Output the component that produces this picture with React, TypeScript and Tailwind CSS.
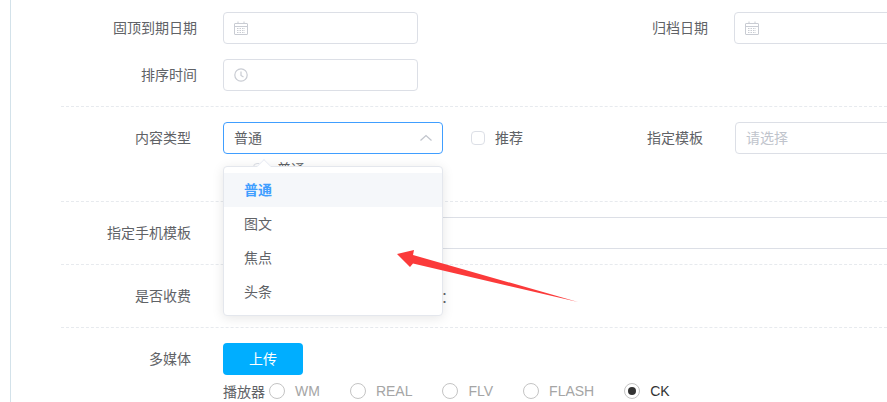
import type { ReactNode } from "react";

const cjk = "font-['Microsoft_YaHei','Noto_Sans_CJK_SC',sans-serif]";

function CalendarIcon() {
  return (
    <svg width="14" height="14" viewBox="0 0 14 14" fill="none" stroke="#c9ccd3" strokeWidth="1">
      <rect x="0.5" y="2.5" width="13" height="11" rx="0.5" />
      <path d="M0.5 5.5h13M4 0.5v2M10 0.5v2" />
      <path d="M3 7.5h8M3 9.5h8M3 11.5h8" strokeDasharray="1.5 1" />
    </svg>
  );
}

function ClockIcon() {
  return (
    <svg width="14" height="14" viewBox="0 0 14 14" fill="none" stroke="#c9ccd3" strokeWidth="1.2">
      <circle cx="7" cy="7" r="6.2" />
      <path d="M7 3.5V7.5L9.5 9" />
    </svg>
  );
}

function Label({ children, w }: { children: ReactNode; w: string }) {
  return <label className={`${w} shrink-0 whitespace-nowrap pb-[2px] text-right text-sm text-[#606266]`}>{children}</label>;
}

function DateInput({ icon, className }: { icon: ReactNode; className: string }) {
  return (
    <div className={`${className} flex h-8 w-[195px] shrink-0 items-center rounded border border-[#dcdfe6] bg-white pl-[10px]`}>
      {icon}
    </div>
  );
}

function Radio({ label, checked }: { label: string; checked?: boolean }) {
  return (
    <div className="flex shrink-0 items-center">
      <span className="flex h-4 w-4 items-center justify-center rounded-full border border-[#c4c4c4] bg-white">
        {checked && <span className="h-2 w-2 rounded-full bg-[#333]" />}
      </span>
      <span className={`ml-[10px] font-['Liberation_Sans',sans-serif] text-sm ${checked ? "text-[#333]" : "text-[#a5a5a5]"}`}>
        {label}
      </span>
    </div>
  );
}

const options = ["普通", "图文", "焦点", "头条"];

export default function App() {
  return (
    <div className={`relative h-[402px] w-[887px] overflow-hidden bg-white ${cjk}`}>
      <div className="ml-[10px] h-full border-l border-[#d3e2ea] pl-[50px]">
        {/* 日期 */}
        <section className="flex h-[106px] flex-col gap-[15px] pt-3">
          <div className="flex items-center">
            <Label w="w-[136px]">固顶到期日期</Label>
            <DateInput className="ml-[26px]" icon={<CalendarIcon />} />
            <Label w="w-[290px]">归档日期</Label>
            <DateInput className="ml-[26px]" icon={<CalendarIcon />} />
          </div>
          <div className="flex items-center">
            <Label w="w-[136px]">排序时间</Label>
            <DateInput className="ml-[26px]" icon={<ClockIcon />} />
          </div>
        </section>

        {/* 内容类型 */}
        <section className="h-[95px] overflow-hidden border-t border-dashed border-[#e7eaee] pt-[15px]">
          <div className="flex items-center">
            <Label w="w-[130px]">内容类型</Label>
            <div className="ml-8 flex h-8 w-[220px] shrink-0 items-center justify-between rounded border border-[#409eff] pb-[1px] pl-[10px] pr-[9px] text-sm text-[#606266]">
              <span className="pb-[1px]">普通</span>
              <svg width="14" height="14" viewBox="0 0 14 14" fill="none" stroke="#c0c4cc" strokeWidth="1.2">
                <path d="M1.5 9.5L7 4.5L12.5 9.5" />
              </svg>
            </div>
            <span className="ml-7 h-[14px] w-[14px] shrink-0 rounded-sm border border-[#dcdfe6]" />
            <span className="ml-[10px] shrink-0 pb-[2px] text-sm text-[#606266]">推荐</span>
            <Label w="w-[180px]">指定模板</Label>
            <div className="ml-8 flex h-8 w-[195px] shrink-0 items-center rounded border border-[#dcdfe6] pb-[2px] pl-[10px] text-sm text-[#c0c4cc]">
              请选择
            </div>
          </div>
          <div className="ml-[192px] mt-[9px] flex items-start">
            <span className="h-[14px] w-[14px] shrink-0 rounded-sm border border-[#dcdfe6]" />
            <span className="ml-[10px] -mt-[5px] text-sm text-[#606266]">普通</span>
          </div>
        </section>

        {/* 手机模板 */}
        <section className="h-[63px] border-t border-dashed border-[#e7eaee] pt-[15px]">
          <div className="flex items-center">
            <Label w="w-[130px]">指定手机模板</Label>
            <div className="ml-8 h-8 grow border-y border-[#dcdfe6]" />
          </div>
        </section>

        {/* 收费 */}
        <section className="flex h-[63px] items-center border-t border-dashed border-[#e7eaee]">
          <Label w="w-[130px]">是否收费</Label>
          <span className="ml-[250px] shrink-0 text-sm text-[#606266]">：</span>
        </section>

        {/* 多媒体 */}
        <section className="border-t border-dashed border-[#e7eaee] pt-[15px]">
          <div className="flex items-center">
            <Label w="w-[130px]">多媒体</Label>
            <button className="ml-8 h-8 w-20 rounded bg-[#00aeff] pb-[2px] text-sm text-white">上传</button>
          </div>
          <div className="ml-[162px] mt-2 flex h-4 items-center text-sm text-[#606266]">
            <span className="mr-[4px] shrink-0">播放器</span>
            <div className="flex gap-[30px]">
              <Radio label="WM" />
              <Radio label="REAL" />
              <Radio label="FLV" />
              <Radio label="FLASH" />
              <Radio label="CK" checked />
            </div>
          </div>
        </section>
      </div>

      {/* 下拉菜单 */}
      <div className="absolute left-[223px] top-[166px] w-[220px] rounded border border-[#e4e7ed] bg-white py-[6px] shadow-[0_2px_12px_rgba(0,0,0,0.1)]">
        <span className="absolute -top-[6px] left-[35px] h-[10px] w-[10px] rotate-45 border-l border-t border-[#ebeef5] bg-white" />
        {options.map((o, i) => (
          <div
            key={o}
            className={`relative flex h-[34px] items-center px-5 pb-[2px] text-sm ${i === 0 ? "bg-[#f5f7fa] font-bold text-[#409eff]" : "text-[#606266]"}`}
          >
            {o}
          </div>
        ))}
      </div>

      {/* 标注箭头 */}
      <svg className="absolute left-[390px] top-[245px]" width="195" height="62" viewBox="0 0 195 62">
        <path d="M7 9L24 5L23 10L188 57L23 18.5L20 22Z" fill="#fb3a3a" />
      </svg>
    </div>
  );
}
